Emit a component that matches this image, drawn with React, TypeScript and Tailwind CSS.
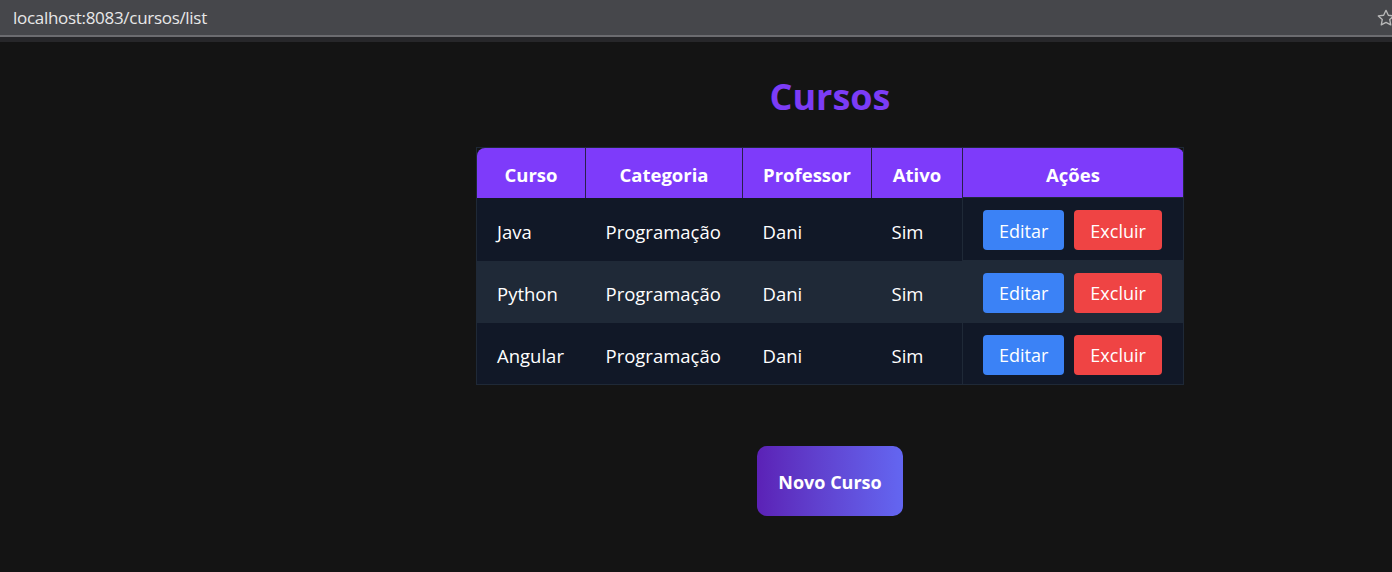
const cursos = [
  { nome: "Java", categoria: "Programação", professor: "Dani", ativo: "Sim" },
  { nome: "Python", categoria: "Programação", professor: "Dani", ativo: "Sim" },
  { nome: "Angular", categoria: "Programação", professor: "Dani", ativo: "Sim" },
];

function BrowserBar() {
  return (
    <div>
      <div className="h-[35px] bg-[#46474b] flex items-center justify-between pl-[13px] pr-[2px]">
        <span className="text-[17px] text-[#e8e8e8] font-['Open_Sans',sans-serif] tracking-[-0.3px]">
          localhost:8083/cursos/list
        </span>
        <svg width="20" height="20" viewBox="0 0 24 24" fill="none" stroke="#b8b8b8" strokeWidth="1.6" strokeLinejoin="round" className="translate-x-[6px]">
          <path d="M12 2.8l2.8 5.9 6.4.8-4.7 4.4 1.2 6.4L12 17.2l-5.7 3.1 1.2-6.4-4.7-4.4 6.4-.8z" />
        </svg>
      </div>
      <div className="h-[2px] bg-[#6c6c70]" />
      <div className="h-[5px] bg-[#27272a]" />
    </div>
  );
}

export default function App() {
  return (
    <div className="min-h-[572px] bg-[#141414] font-['Open_Sans',sans-serif]">
      <BrowserBar />
      <div className="flex">
        <div className="w-[268px] shrink-0" />
        <main className="flex-1 flex flex-col items-center pt-[35px]">
          <h1 className="text-[36px] leading-[40px] font-bold text-[#7c3cf6]">Cursos</h1>

          <table className="mt-[30px] w-[707px] table-fixed border-collapse text-white text-[18.5px] border border-[#1f2937]">
            <colgroup>
              <col className="w-[109px]" />
              <col className="w-[157px]" />
              <col className="w-[129px]" />
              <col className="w-[91px]" />
              <col className="w-[221px]" />
            </colgroup>
            <thead>
              <tr className="h-[50px] bg-[#7e3bfa] font-bold">
                <th className="pt-[4px] rounded-tl-[8px] border-r border-[#2a1f4a]">Curso</th>
                <th className="pt-[4px] border-r border-[#2a1f4a]">Categoria</th>
                <th className="pt-[4px] border-r border-[#2a1f4a]">Professor</th>
                <th className="pt-[4px] border-r border-[#2a1f4a]">Ativo</th>
                <th className="pt-[4px] rounded-tr-[8px]">Ações</th>
              </tr>
            </thead>
            <tbody>
              {cursos.map((c, i) => (
                <tr key={c.nome} className={i % 2 === 1 ? "h-[62px] bg-[#1f2937]" : i === 0 ? "h-[63px] bg-[#111827]" : "h-[62px] bg-[#111827]"}>
                  <td className="px-5 pt-[5px]">{c.nome}</td>
                  <td className="px-5 pt-[5px]">{c.categoria}</td>
                  <td className="px-5 pt-[5px]">{c.professor}</td>
                  <td className="px-5 pt-[5px]">{c.ativo}</td>
                  <td className="px-5 pt-[2px] border border-[#1f2937]">
                    <div className="flex gap-[10px] text-[18px]">
                      <button className="h-[40px] px-4 pt-[2px] rounded-[4px] bg-[#3b82f6] text-white">Editar</button>
                      <button className="h-[40px] px-4 pt-[2px] rounded-[4px] bg-[#ef4444] text-white">Excluir</button>
                    </div>
                  </td>
                </tr>
              ))}
            </tbody>
          </table>

          <button className="mt-[61px] w-[146px] h-[70px] pt-[3px] rounded-[10px] bg-gradient-to-r from-[#5b21b6] to-[#6366f1] text-white text-[18px] font-bold">
            Novo Curso
          </button>
        </main>
      </div>
    </div>
  );
}
